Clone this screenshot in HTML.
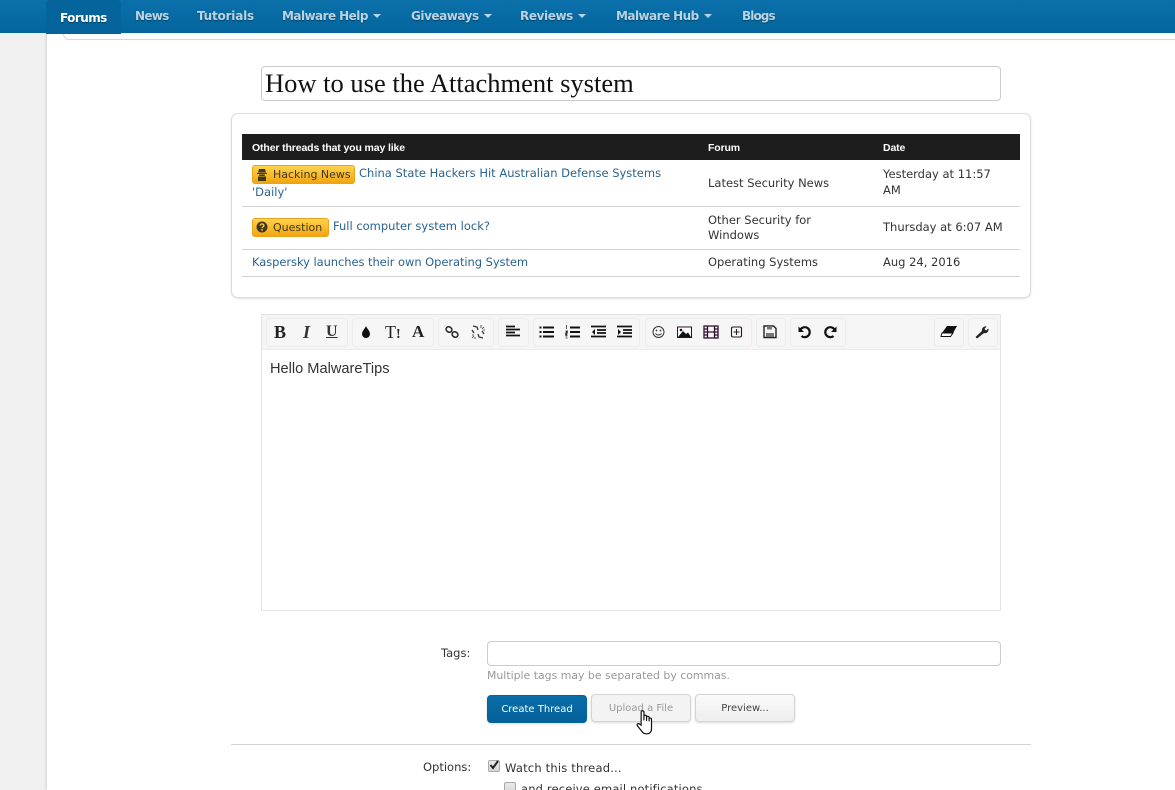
<!DOCTYPE html>
<html><head><meta charset="utf-8"><title>How to use the Attachment system</title>
<style>
*{box-sizing:border-box}
html,body{margin:0;padding:0;width:1175px;height:790px;overflow:hidden;background:#f0f0f0}
body{position:relative;font-family:"DejaVu Sans","Liberation Sans",sans-serif;font-size:11.5px;color:#333}
.a{position:absolute;white-space:nowrap}
.nav{color:#b9d3e3;font-weight:bold;font-size:12px;top:9px;text-shadow:0 1px 1px rgba(0,0,0,.35);font-family:"DejaVu Sans",sans-serif;letter-spacing:-.55px}
.nav i{display:inline-block;border:4px solid transparent;border-top-color:#b9d3e3;border-bottom:0;margin-left:5px;vertical-align:2px}
.line{position:absolute;height:1px;background:#d2d2d2}
.lnk{color:#2a6390}
.pre{position:absolute;height:19px;border:1px solid #e8a51c;border-radius:3px;background:linear-gradient(#ffd24e,#f2a50f);color:#40381c;font-size:11px;line-height:18px}
.th{color:#fff;font:bold 10.5px/14px "Liberation Sans",sans-serif;top:141px;letter-spacing:-.13px}
.g{position:absolute;top:318px;height:29px;border:1px solid #ececec;border-radius:4px;background:#f6f6f6}
.ic{position:absolute;top:322px;width:20px;height:20px}
.btn{position:absolute;top:694px;height:28px;border:1px solid #d4d4d4;border-radius:4px;background:linear-gradient(#fafafa,#eee);box-shadow:0 1px 2px rgba(0,0,0,.15);text-align:center;line-height:28px;font-size:10px;color:#444}
.cb{position:absolute;width:12px;height:12px;border:1px solid #aaa;border-radius:2px;background:linear-gradient(#e8e8e8,#d8d8d8)}
.op{letter-spacing:.2px}
</style></head>
<body>
<div class="a" style="left:47px;top:0;width:1128px;height:790px;background:#fff;box-shadow:-1px 0 2px rgba(0,0,0,.12)"></div>
<div class="a" style="left:63px;top:28px;width:1112px;height:12px;background:#fff;border:1px solid #d3d6e4;border-right:0;border-radius:0 0 0 6px"></div>
<div class="a" style="left:0;top:0;width:1175px;height:33px;background:linear-gradient(#0b70aa,#04659d)"></div>
<div class="a" style="left:46px;top:0;width:75px;height:34px;background:#04649b;border-radius:4px 4px 0 0"></div>
<div class="a nav" style="left:60px;top:11px;color:#fff">Forums</div>
<div class="a nav" style="left:135px;letter-spacing:-.7px">News</div>
<div class="a nav" style="left:197px;letter-spacing:-.2px">Tutorials</div>
<div class="a nav" style="left:282px">Malware Help<i></i></div>
<div class="a nav" style="left:411px;letter-spacing:-.45px">Giveaways<i></i></div>
<div class="a nav" style="left:520px;letter-spacing:-.4px">Reviews<i></i></div>
<div class="a nav" style="left:616px">Malware Hub<i></i></div>
<div class="a nav" style="left:742px;letter-spacing:-.9px">Blogs</div>

<div class="a" style="left:261px;top:66px;width:740px;height:35px;border:1px solid #ccc;border-radius:4px;background:#fff"></div>
<div class="a" style="left:265px;top:68px;font:26.5px/30px 'Liberation Serif',serif;color:#111">How to use the Attachment system</div>

<div class="a" style="left:231px;top:113px;width:800px;height:185px;border:1px solid #ddd;border-radius:7px;background:#fff;box-shadow:0 1px 2px rgba(0,0,0,.12)"></div>
<div class="a" style="left:242px;top:134px;width:778px;height:26px;background:#1d1d1d"></div>
<div class="a th" style="left:252px">Other threads that you may like</div>
<div class="a th" style="left:708px">Forum</div>
<div class="a th" style="left:883px">Date</div>

<div class="pre" style="left:252px;top:165px;width:103px;padding-left:20px">Hacking News</div>
<svg class="a" style="left:256px;top:168px" width="12" height="13" viewBox="0 0 12 13"><path fill="#40381c" d="M3 1h6l1 3.500H2zM1 5h10v1H1zM3.200 6.500h5.600V8H3.200zM2 8.500h8V13H2z"/></svg>
<div class="a lnk" style="left:359px;top:166px">China State Hackers Hit Australian Defense Systems</div>
<div class="a lnk" style="left:252px;top:185px">'Daily'</div>
<div class="a" style="left:708px;top:176px">Latest Security News</div>
<div class="a" style="left:883px;top:167px">Yesterday at 11:57</div>
<div class="a" style="left:883px;top:183px">AM</div>
<div class="line" style="left:242px;top:206px;width:778px"></div>

<div class="pre" style="left:252px;top:218px;width:77px;padding-left:20px">Question</div>
<svg class="a" style="left:256px;top:221px" width="12" height="12" viewBox="0 0 12 12"><circle cx="6" cy="6" r="5.500" fill="#40381c"/><path d="M4.200 4.600c0-2.200 3.700-2.200 3.700 0 0 1.400-1.900 1.300-1.900 2.600" fill="none" stroke="#fdc43a" stroke-width="1.400"/><rect x="5.200" y="8.200" width="1.600" height="1.500" fill="#fdc43a"/></svg>
<div class="a lnk" style="left:333px;top:219px">Full computer system lock?</div>
<div class="a" style="left:708px;top:213px">Other Security for</div>
<div class="a" style="left:708px;top:228px">Windows</div>
<div class="a" style="left:883px;top:220px">Thursday at 6:07 AM</div>
<div class="line" style="left:242px;top:249px;width:778px"></div>

<div class="a lnk" style="left:252px;top:255px;letter-spacing:-.07px">Kaspersky launches their own Operating System</div>
<div class="a" style="left:708px;top:255px">Operating Systems</div>
<div class="a" style="left:883px;top:255px">Aug 24, 2016</div>
<div class="line" style="left:242px;top:276px;width:778px"></div>

<div class="a" style="left:261px;top:314px;width:740px;height:297px;border:1px solid #e3e3e3;background:#fff"></div>
<div class="a" style="left:262px;top:315px;width:738px;height:35px;background:#f5f5f5;border-bottom:1px solid #ececec"></div>
<div class="g" style="left:266px;width:82px"></div>
<div class="g" style="left:352px;width:82px"></div>
<div class="g" style="left:438px;width:56px"></div>
<div class="g" style="left:498px;width:31px"></div>
<div class="g" style="left:533px;width:107px"></div>
<div class="g" style="left:645px;width:107px"></div>
<div class="g" style="left:756px;width:30px"></div>
<div class="g" style="left:790px;width:56px"></div>
<div class="g" style="left:934px;width:30px"></div>
<div class="g" style="left:968px;width:30px"></div>

<div class="a" style="left:274px;top:323px;font:bold 18px/18px 'Liberation Serif',serif;color:#222">B</div>
<div class="a" style="left:303px;top:323px;font:italic bold 18px/18px 'Liberation Serif',serif;color:#333">I</div>
<div class="a" style="left:326px;top:323px;font:bold 16px/18px 'Liberation Serif',serif;color:#333;text-decoration:underline">U</div>
<svg class="ic" style="left:356px" viewBox="0 0 20 20"><path fill="#111" d="M10 4c1 2.500 4 5 4 8a4 4 0 0 1-8 0c0-3 3-5.500 4-8z"/></svg>
<div class="a" style="left:385px;top:323px;font:18px/18px 'Liberation Serif',serif;color:#222">T<span style="font-size:14px;font-weight:bold">!</span></div>
<div class="a" style="left:412px;top:323px;font:bold 17px/18px 'Liberation Serif',serif;color:#222">A</div>
<svg class="ic" style="left:442px" viewBox="0 0 20 20"><g fill="none" stroke="#222" stroke-width="1.500"><rect x="4" y="5" width="6" height="5" rx="2.500" transform="rotate(35 7 7.500)"/><rect x="10" y="10" width="6" height="5" rx="2.500" transform="rotate(35 13 12.500)"/></g></svg>
<svg class="ic" style="left:468px" viewBox="0 0 20 20"><g fill="none" stroke="#333" stroke-width="1.300"><path d="M5 4l4 1 1 3M15 16l-4-1-1-3M4 8l2 3M16 12l-2-3"/><path stroke-width=".8" d="M13 3v3M16 5l-2 2M17 8h-2M4 13h2M4 16l2-2M7 17v-2"/></g></svg>
<svg class="ic" style="left:503px" viewBox="0 0 20 20"><path stroke="#111" stroke-width="1.700" d="M3 4.500h9M3 7.500h14M3 10.500h9M3 13.500h14"/></svg>
<svg class="ic" style="left:537px" viewBox="0 0 20 20"><path stroke="#111" stroke-width="2" d="M6 5.500h11M6 10h11M6 14.500h11M2.500 5.500h2M2.500 10h2M2.500 14.500h2"/></svg>
<svg class="ic" style="left:563px" viewBox="0 0 20 20"><path stroke="#111" stroke-width="2" d="M7 5.500h10M7 10h10M7 14.500h10"/><path stroke="#555" stroke-width="1" d="M3.500 3v4M2.500 9h2v2h-2v2h2M2.500 14h2M2.500 16h2"/></svg>
<svg class="ic" style="left:589px" viewBox="0 0 20 20"><path stroke="#111" stroke-width="1.700" d="M2 4.500h15M8 8h9M8 11h9M2 14.500h15"/><path fill="#111" d="M6 7v6l-3-3z"/></svg>
<svg class="ic" style="left:615px" viewBox="0 0 20 20"><path stroke="#111" stroke-width="1.700" d="M2 4.500h15M8 8h9M8 11h9M2 14.500h15"/><path fill="#111" d="M3 7v6l3-3z"/></svg>
<svg class="ic" style="left:649px" viewBox="0 0 20 20"><circle cx="9.500" cy="10" r="5.500" fill="none" stroke="#333"/><circle cx="7.500" cy="8.500" r=".9" fill="#333"/><circle cx="11.500" cy="8.500" r=".9" fill="#333"/><path d="M6.500 11.500c1.500 2 4.500 2 6 0" fill="none" stroke="#333"/></svg>
<svg class="ic" style="left:675px" viewBox="0 0 20 20"><rect x="2.500" y="5" width="14" height="10.500" fill="#fff" stroke="#301030"/><path fill="#111" d="M3 15l5-6 3 3 2-1.500 3 4.500z"/><circle cx="6" cy="8" r="1.300" fill="#111"/></svg>
<svg class="ic" style="left:701px" viewBox="0 0 20 20"><g fill="none" stroke="#301030" stroke-width="1.300"><rect x="3" y="4" width="14" height="12"/><path d="M6.500 4v12M13.500 4v12M6.500 10h7M3 7h3.500M3 10h3.500M3 13h3.500M13.500 7H17M13.500 10H17M13.500 13H17"/></g></svg>
<svg class="ic" style="left:727px" viewBox="0 0 20 20"><rect x="4.500" y="5" width="10" height="10" rx="1.500" fill="none" stroke="#301030" stroke-width="1.100"/><path d="M9.500 7v6M6.500 10h6" stroke="#222" stroke-width="1.100"/></svg>
<svg class="ic" style="left:760px" viewBox="0 0 20 20"><path fill="none" stroke="#222" stroke-width="1.400" d="M4 4h9.500l2.500 2.500v9H4z"/><path fill="#777" d="M7 4h5v3.500H7zM6 11h8v4H6z"/></svg>
<svg class="ic" style="left:794px" viewBox="0 0 20 20"><path fill="none" stroke="#111" stroke-width="2.200" d="M6.500 7.500a5 5 0 1 1 1 6.500"/><path fill="#111" d="M4.500 4.500v5.500h5.500z"/></svg>
<svg class="ic" style="left:821px" viewBox="0 0 20 20"><path fill="none" stroke="#111" stroke-width="2.200" d="M13.500 7.500a5 5 0 1 0-1 6.500"/><path fill="#111" d="M15.500 4.500v5.500h-5.500z"/></svg>
<svg class="ic" style="left:939px" viewBox="0 0 20 20"><path fill="#111" d="M8 4h10l-4 7H3z"/><path fill="#fff" stroke="#111" d="M3 11h11l-2.500 3.500H2z"/></svg>
<svg class="ic" style="left:973px" viewBox="0 0 20 20"><path fill="#222" d="M4 16.500l-1.500-1.500 6.500-6c-.5-2.500 1.500-5 4.500-4.500L11.500 7l1.500 1.500 2.500-2c.5 3-2 5.500-4.500 4.500z"/></svg>

<div class="a" style="left:270px;top:360px;font-size:14.600px;line-height:18px;color:#333;font-family:'Liberation Sans',sans-serif">Hello MalwareTips</div>

<div class="a" style="left:441px;top:646px">Tags:</div>
<div class="a" style="left:487px;top:641px;width:514px;height:25px;border:1px solid #ccc;border-radius:4px;background:#fff"></div>
<div class="a" style="left:487px;top:669px;color:#999;font-size:10.900px">Multiple tags may be separated by commas.</div>
<div class="btn" style="left:487px;top:695px;width:100px;background:linear-gradient(#0a6ea8,#04609a);color:#fff;border-color:#05639c">Create Thread</div>
<div class="btn" style="left:591px;width:100px;color:#999;background:#f3f3f3">Upload a File</div>
<div class="btn" style="left:695px;width:100px">Preview...</div>
<svg class="a" style="left:635px;top:709px" width="22" height="27" viewBox="0 0 20 25"><path fill="#fff" stroke="#111" stroke-width="1.100" d="M5.500 15V3a1.300 1.300 0 0 1 2.600 0v7.500V7a1.200 1.200 0 0 1 2.400 0v4V8a1.200 1.200 0 0 1 2.400 0v3.500-2a1.100 1.100 0 0 1 2.200 0V18c0 3-1.500 5-4.500 5H10c-2 0-3-1-4-2.500L2 15.500c-1-1.500 1-2.500 2-1.500z"/></svg>

<div class="line" style="left:231px;top:744px;width:800px"></div>
<div class="a" style="left:423px;top:760px">Options:</div>
<div class="cb" style="left:488px;top:760px"></div>
<svg class="a" style="left:488px;top:759px" width="12" height="12" viewBox="0 0 12 12"><path d="M2.500 6l2.500 3 5-7" fill="none" stroke="#222" stroke-width="2"/></svg>
<div class="a op" style="left:505px;top:761px">Watch this thread...</div>
<div class="cb" style="left:504px;top:782px"></div>
<div class="a op" style="left:521px;top:782px;letter-spacing:.15px">and receive email notifications</div>
</body></html>
